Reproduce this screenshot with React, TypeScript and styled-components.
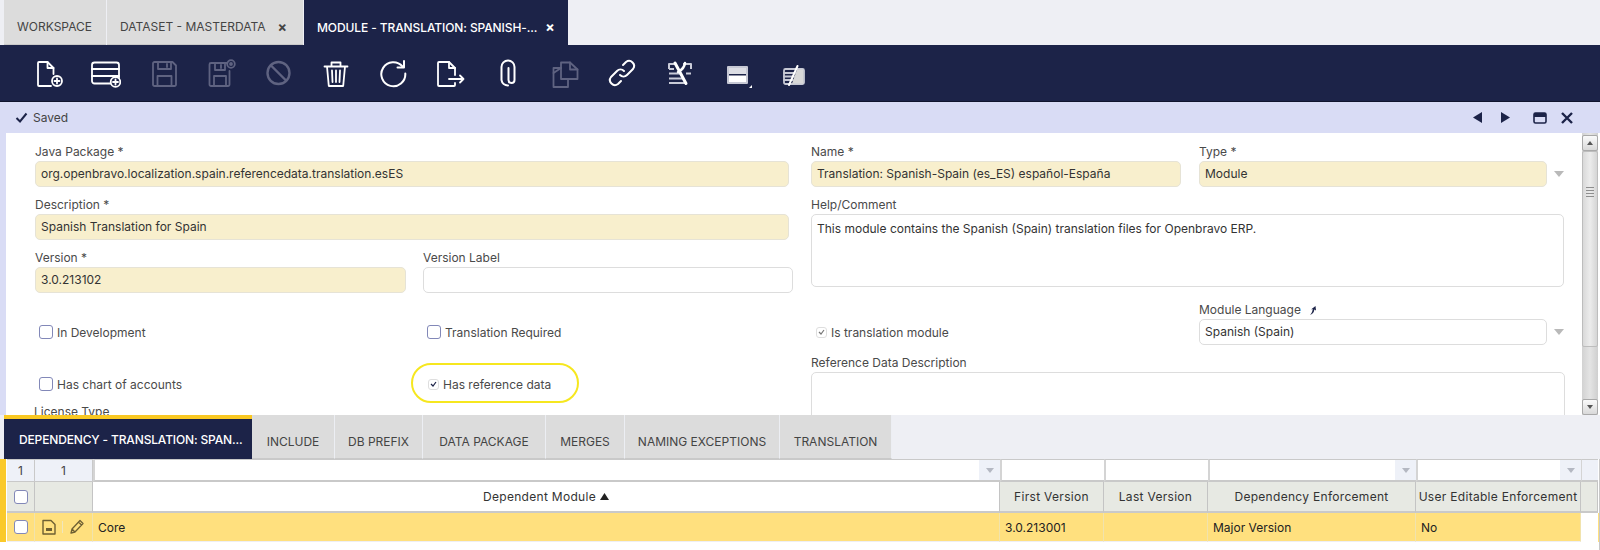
import React from "react";
import styled, { createGlobalStyle } from "styled-components";

const Global = createGlobalStyle`
  html, body { margin: 0; padding: 0; background: #fff; overflow: hidden; }
  body { font-family: "Inter", "Liberation Sans", sans-serif; font-size: 12px; color: #333; }
  * { box-sizing: border-box; }
`;

const Page = styled.div`
  width: 1600px; height: 550px; display: flex; flex-direction: column; overflow: hidden;
`;

/* top tabs */
const TabBar = styled.div`
  height: 45px; flex: none; display: flex; align-items: stretch; padding-left: 4px; background: #eeeff4;
`;
const TopTab = styled.div<{ $w: number; $active?: boolean }>`
  width: ${(p) => p.$w}px; display: flex; align-items: center; justify-content: space-between;
  padding: 9px 16px 0 13px; margin-right: 1px;
  background: ${(p) => (p.$active ? "#1c2348" : "#dcdcdc")};
  color: ${(p) => (p.$active ? "#fff" : "#444")};
  font-size: 12px; font-weight: ${(p) => (p.$active ? 500 : 400)}; white-space: nowrap;
  letter-spacing: ${(p) => (p.$active ? "-0.1px" : "0")};
  border-bottom: ${(p) => (p.$active ? "none" : "1px solid #c9c9c9")};
`;
const TabClose = styled.span`
  font-size: 14px; font-weight: 700; line-height: 1; margin-left: 8px;
`;

/* toolbar */
const Toolbar = styled.div`
  height: 57px; flex: none; background: #1c2348; display: flex; align-items: center; padding: 0 0 1px 20.5px;
  border-bottom: 1px solid #10142e;
`;
const ToolButton = styled.div<{ $off?: boolean }>`
  width: 57.3px; display: flex; justify-content: center; align-items: center;
  color: ${(p) => (p.$off ? "#5f6381" : "#fff")};
  svg { display: block; }
`;

/* status */
const StatusBar = styled.div`
  height: 31px; flex: none; background: #d9dcf5; display: flex; align-items: center; padding: 0 27px 0 15px; color: #444;
`;
const SavedText = styled.span`
  margin-left: 5px; flex: 1; font-size: 12px;
`;
const WinButtons = styled.div`
  display: flex; align-items: center; color: #1c2348;
`;
const WinButton = styled.span<{ $ml: number }>`
  display: block; margin-left: ${(p) => p.$ml}px;
  svg { display: block; }
`;

/* form */
const FormPane = styled.div`
  height: 282px; flex: none; display: flex; background: #fff; overflow: hidden;
`;
const FormBody = styled.div`
  flex: 1; min-width: 0; border-left: 6px solid #d9dcf5; padding: 10px 0 0 29px; overflow: hidden;
`;
const FormGrid = styled.div`
  display: grid;
  grid-template-columns: 388px 388px 388px 385px;
  grid-template-rows: 53px 53px 52px 53px 49px 40px;
`;
const Field = styled.div<{ $span?: number; $rows?: number }>`
  grid-column: span ${(p) => p.$span ?? 1};
  grid-row: span ${(p) => p.$rows ?? 1};
  position: relative;
`;
const Label = styled.div`
  height: 18px; line-height: 18px; font-size: 12px; color: #4a4a4a; white-space: nowrap;
  display: flex; align-items: center; gap: 7px;
`;
const InputBox = styled.div<{ $w: number; $h?: number; $req?: boolean }>`
  width: ${(p) => p.$w}px; height: ${(p) => p.$h ?? 26}px;
  background: ${(p) => (p.$req ? "#f8efcd" : "#fff")};
  border: 1.5px solid ${(p) => (p.$req ? "#e6e3d6" : "#dddddd")};
  border-radius: 5px; padding: 0 5px; font-size: 12px; color: #333; white-space: nowrap; overflow: hidden;
  line-height: ${(p) => (p.$h ? "21px" : "23px")};
  padding-top: ${(p) => (p.$h ? "3px" : "0")};
`;
const SelectRow = styled.div`
  display: flex; align-items: center; gap: 7px;
`;
const Arrow = styled.span`
  width: 0; height: 0; border-left: 5px solid transparent; border-right: 5px solid transparent; border-top: 6px solid #b9b9b9;
`;
const CheckField = styled.div<{ $mt?: number }>`
  grid-column: span 1; position: relative; height: 26px; margin-top: ${(p) => p.$mt ?? 18}px;
  display: flex; align-items: center; gap: 4px; font-size: 12px; color: #4a4a4a; padding-left: 4px; white-space: nowrap;
`;
const CheckBox = styled.span<{ $checked?: boolean }>`
  flex: none; display: inline-flex; align-items: center; justify-content: center;
  width: ${(p) => (p.$checked ? 11 : 14)}px; height: ${(p) => (p.$checked ? 11 : 14)}px;
  margin-left: ${(p) => (p.$checked ? 1 : 0)}px;
  border: ${(p) => (p.$checked ? "1px solid #dedede" : "1.5px solid #8288b8")};
  border-radius: 3px; background: #fff; color: #1c2348;
`;
const Highlight = styled.div`
  position: absolute; left: -12px; top: -8px; width: 168px; height: 40px;
  border: 2px solid #f6e71f; border-radius: 20px; pointer-events: none;
`;
const ClippedLabel = styled(Label)`
  margin-left: -1px; margin-top: 0;
`;

/* scrollbar */
const ScrollTrack = styled.div`
  width: 16px; flex: none; display: flex; flex-direction: column; align-items: stretch;
  background: linear-gradient(90deg, #d2d2d2, #e4e4e4 50%, #cfcfcf); padding-top: 2px;
`;
const ScrollBtn = styled.div`
  height: 16px; flex: none; border: 1px solid #a9a9a9; border-radius: 2px;
  background: linear-gradient(#fafafa, #d9d9d9); display: flex; align-items: center; justify-content: center;
`;
const ScrollThumb = styled.div`
  height: 196px; flex: none; border: 1px solid #bdbdbd; border-radius: 2px;
  background: linear-gradient(90deg, #d9d9d9, #ececec 50%, #d5d5d5); display: flex; flex-direction: column; align-items: center; padding-top: 35px; gap: 2px;
`;
const Grip = styled.i`
  display: block; width: 8px; height: 1px; background: #8e8e8e;
`;
const ScrollSpace = styled.div`
  flex: 1;
`;
const RightGap = styled.div`
  width: 2px; flex: none; background: #fff;
`;
const TinyUp = styled.span`
  width: 0; height: 0; border-left: 3px solid transparent; border-right: 3px solid transparent; border-bottom: 4px solid #555;
`;
const TinyDown = styled.span`
  width: 0; height: 0; border-left: 3px solid transparent; border-right: 3px solid transparent; border-top: 4px solid #555;
`;

/* child tabs */
const ChildBar = styled.div`
  height: 44px; flex: none; display: flex; background: #eeeff4; padding-left: 4px;
`;
const ChildActive = styled.div`
  width: 248px; background: #1c2348; border-top: 4px solid #f9c822; color: #fff; font-weight: 500; letter-spacing: -0.15px;
  font-size: 12px; display: flex; align-items: center; padding-left: 15px; white-space: nowrap;
`;
const ChildTab = styled.div<{ $w: number }>`
  width: ${(p) => p.$w}px; background: #dcdcdc; color: #444; font-size: 12px; white-space: nowrap;
  display: flex; align-items: center; justify-content: center; padding-top: 9px;
  border-right: 1px solid #eceef3; border-bottom: 1px solid #c9c9c9;
`;

/* grid */
const GridPane = styled.div`
  flex: 1; display: flex; flex-direction: column; border-right: 1px solid #c8c8c8;
`;
const GridWrap = styled.div`
  border-left: 6px solid #fac92a; padding-left: 1px; width: 1599px;
`;
const Row = styled.div<{ $h: number; $bg: string }>`
  height: ${(p) => p.$h}px; background: ${(p) => p.$bg};
  display: grid; grid-template-columns: 28px 58px 907px 104px 104px 208px 165px 17px;
`;
const CountCell = styled.div`
  background: #eef1f8; border: 1px solid #c9c9c9; border-left: none; display: flex; align-items: center; justify-content: center; color: #444; font-size: 12px;
`;
const FilterCell = styled.div`
  background: #fff; border-top: 1px solid #c9c9c9; border-bottom: 2px solid #c9c9c9; border-left: 2px solid #d4d4d4;
  display: flex; justify-content: flex-end;
`;
const FilterArrow = styled.div`
  width: 21px; background: #eef1f8; display: flex; align-items: center; justify-content: center;
`;
const SmallArrow = styled.span`
  width: 0; height: 0; border-left: 4px solid transparent; border-right: 4px solid transparent; border-top: 5px solid #b4b8c2;
`;
const FilterEnd = styled.div`
  background: #eef1f8; border-top: 1px solid #c9c9c9; border-bottom: 2px solid #c9c9c9; border-left: 1px solid #d4d4d4;
`;
const HeadCell = styled.div<{ $blank?: boolean }>`
  background: ${(p) => (p.$blank ? "#fff" : "#e7e9e3")};
  border-right: 1px solid #c4c4c4; border-bottom: 2px solid #c9c9c9;
  display: flex; align-items: center; justify-content: center; gap: 4px; font-size: 12px; letter-spacing: 0.3px; color: #333; white-space: nowrap; overflow: hidden;
`;
const DataCell = styled.div`
  border-right: 1px solid #f1e3ad; border-bottom: 1px solid #eeeff4; display: flex; align-items: center; padding-left: 5px;
  font-size: 12px; color: #222; white-space: nowrap;
`;
const CenterCell = styled(DataCell)`
  padding-left: 0; justify-content: center;
`;
const ActionCell = styled(DataCell)`
  padding-left: 7px; gap: 6px;
`;
const GridCheck = styled.span`
  width: 14px; height: 14px; background: #fff; border: 1.5px solid #8288b8; border-radius: 3px;
`;
const ActionSep = styled.span`
  width: 1px; height: 12px; background: #f0e6bd;
`;
const EmptyDataEnd = styled.div`
  background: #fff;
`;

const S = { fill: "none", stroke: "currentColor", strokeWidth: 1.8, strokeLinecap: "round" as const, strokeLinejoin: "round" as const };

const Ic = ({ children }: { children: React.ReactNode }) => (
  <svg width={30} height={30} viewBox="0 0 30 30" {...S}>{children}</svg>
);

const icons: { off?: boolean; el: React.ReactNode }[] = [
  { el: <Ic><path d="M19.500 16V10l-6-6H5a1 1 0 0 0-1 1v22a1 1 0 0 0 1 1h12" /><path d="M13.500 4v6h6" /><circle cx="23" cy="23" r="5" /><path d="M20.500 23h5M23 20.500v5" /></Ic> },
  { el: <Ic><rect x="1" y="4.500" width="27" height="21" rx="2.500" /><path d="M1 11h27M1 18h27" /><circle cx="24.500" cy="24" r="4.800" fill="#1c2348" /><path d="M22 24h5M24.500 21.500v5" /></Ic> },
  { off: true, el: <Ic><path d="M5.500 4h18l3.500 3.500V26.500a1.500 1.500 0 0 1-1.500 1.500H5.500A1.500 1.500 0 0 1 4 26.500v-21A1.500 1.500 0 0 1 5.500 4z" /><path d="M9 4v7h13V4M18 6v3M8.500 28v-10h14v10" /></Ic> },
  { off: true, el: <Ic><path d="M5 5h16M5 5a1.500 1.500 0 0 0-1.500 1.500v20A1.500 1.500 0 0 0 5 28h17a1.500 1.500 0 0 0 1.500-1.500V13" /><path d="M9 5v7h10V5M15 7v3M8 28v-10h12v10" /><circle cx="25" cy="6" r="3.800" /><circle cx="25" cy="6" r="1" /></Ic> },
  { off: true, el: <Ic><circle cx="15.500" cy="15" r="11" strokeWidth="2.400" /><path d="M8 7.500l15 15" strokeWidth="2.400" /></Ic> },
  { el: <Ic><path d="M3.500 8.500h23M10.500 8V4.500h9V8M6 8.500l1.800 19.500h14.400l1.800-19.500M11 12.500l.5 11.500M15 12.500v11.500M19 12.500l-.5 11.500" /></Ic> },
  { el: <Ic><path d="M24.500 8.500a12 12 0 1 0 2.800 7" strokeWidth="2" /><path d="M26 3v6.500h-6.500" strokeWidth="2" /></Ic> },
  { el: <Ic><path d="M20 17V10l-6-6H4a1 1 0 0 0-1 1v22a1 1 0 0 0 1 1h15a1 1 0 0 0 1-1v-2" /><path d="M14 4v6h6" /><path d="M14 21h14.500M25 17.500l3.500 3.500-3.500 3.500" /></Ic> },
  { el: <Ic><path d="M15.500 10v12a3 3 0 0 0 6 0V9a6.500 6.500 0 0 0-13 0v13a6.500 6.500 0 0 0 6.500 5.500" strokeWidth="2" /></Ic> },
  { off: true, el: <Ic><path d="M11 10H3.500v19H18v-8" /><path d="M11 4.500h9l7.500 7V21H11z" /><path d="M20 4.500v7h7.500M3.500 15l7.500-5" /></Ic> },
  { el: <Ic><path d="M13 17a5 5 0 0 0 7 0l6-6a5 5 0 0 0-7-7l-3 3" strokeWidth="2" /><path d="M17 13a5 5 0 0 0-7 0l-6 6a5 5 0 0 0 7 7l3-3" strokeWidth="2" /></Ic> },
  { el: <Ic>
    <path d="M5 11V6h7M19 6h8v5M5 11h5M5 15.500h11M22 15.500h5M5 20.500h14M5 25h16" stroke="#c9cbd8" strokeWidth="2" strokeLinecap="butt" />
    <path d="M11 5l11 20.500" stroke="#fff" strokeWidth="3" />
    <path d="M21 5c-.5 4-3 7-7 9" stroke="#fff" strokeWidth="2.500" />
  </Ic> },
  { el: <Ic>
    <rect x="6" y="9" width="19" height="16" stroke="#c6c8d4" strokeWidth="2" strokeLinecap="butt" />
    <rect x="7" y="10" width="17" height="6" fill="#dcdde4" stroke="none" />
    <rect x="7" y="17.500" width="17" height="6.500" fill="#fff" stroke="none" />
    <path d="M27 30h3v-3z" fill="#fff" stroke="none" />
  </Ic> },
  { el: <Ic>
    <rect x="5" y="11" width="20" height="15" rx="1.500" stroke="#c6c8d4" />
    <path d="M5 15h11M5 18.500h10M5 22h9" stroke="#c6c8d4" />
    <path d="M18 11.500h6.500v14H13z" fill="#d8d8d8" stroke="none" />
    <path d="M18.500 8L10 27" stroke="#fff" strokeWidth="2" />
  </Ic> },
];

const cols = ["First Version", "Last Version", "Dependency Enforcement", "User Editable Enforcement"];

const Filter = ({ arrow }: { arrow?: boolean }) => (
  <FilterCell>{arrow && <FilterArrow><SmallArrow /></FilterArrow>}</FilterCell>
);

export default function App() {
  return (
    <Page>
      <Global />
      <TabBar>
        <TopTab $w={102}>WORKSPACE</TopTab>
        <TopTab $w={196}>DATASET - MASTERDATA<TabClose>×</TabClose></TopTab>
        <TopTab $w={264} $active>MODULE - TRANSLATION: SPANISH-...<TabClose>×</TabClose></TopTab>
      </TabBar>
      <Toolbar>
        {icons.map((ic, i) => <ToolButton key={i} $off={ic.off}>{ic.el}</ToolButton>)}
      </Toolbar>
      <StatusBar>
        <svg width="13" height="11" viewBox="0 0 13 11"><path d="M1.500 6l3.500 3.500L11.500 1.500" fill="none" stroke="#1c2348" strokeWidth="2" /></svg>
        <SavedText>Saved</SavedText>
        <WinButtons>
          <WinButton $ml={0}><svg width="9" height="11" viewBox="0 0 9 11"><path d="M9 0v11L0 5.500z" fill="currentColor" /></svg></WinButton>
          <WinButton $ml={19}><svg width="9" height="11" viewBox="0 0 9 11"><path d="M0 0v11l9-5.500z" fill="currentColor" /></svg></WinButton>
          <WinButton $ml={23}><svg width="14" height="12" viewBox="0 0 14 12"><rect x="1" y="1" width="12" height="10" rx="1.500" fill="none" stroke="currentColor" strokeWidth="1.600" /><rect x="1" y="1" width="12" height="4" fill="currentColor" /></svg></WinButton>
          <WinButton $ml={14}><svg width="12" height="12" viewBox="0 0 12 12"><path d="M1 1l10 10M11 1L1 11" stroke="currentColor" strokeWidth="2.400" /></svg></WinButton>
        </WinButtons>
      </StatusBar>
      <FormPane>
        <FormBody>
          <FormGrid>
            <Field $span={2}><Label>Java Package *</Label><InputBox $w={754} $req>org.openbravo.localization.spain.referencedata.translation.esES</InputBox></Field>
            <Field><Label>Name *</Label><InputBox $w={370} $req>Translation: Spanish-Spain (es_ES) español-España</InputBox></Field>
            <Field><Label>Type *</Label><SelectRow><InputBox $w={348} $req>Module</InputBox><Arrow /></SelectRow></Field>

            <Field $span={2}><Label>Description *</Label><InputBox $w={754} $req>Spanish Translation for Spain</InputBox></Field>
            <Field $span={2} $rows={2}><Label>Help/Comment</Label><InputBox $w={753} $h={73}>This module contains the Spanish (Spain) translation files for Openbravo ERP.</InputBox></Field>

            <Field><Label>Version *</Label><InputBox $w={371} $req>3.0.213102</InputBox></Field>
            <Field><Label>Version Label</Label><InputBox $w={370} /></Field>

            <CheckField><CheckBox />In Development</CheckField>
            <CheckField><CheckBox />Translation Required</CheckField>
            <CheckField>
              <CheckBox $checked><svg width="7" height="6" viewBox="0 0 7 6"><path d="M1 3l2 2 3-4" fill="none" stroke="#777" strokeWidth="1.200" /></svg></CheckBox>
              Is translation module
            </CheckField>
            <Field>
              <Label>Module Language
                <svg width="9" height="11" viewBox="0 0 9 11"><path d="M2 10c2-2 2.500-4 2.700-6L3 4.500 7.500 1 8 5.500 6.300 4.500C6.200 7 5 9 2 10z" fill="#1c2348" /></svg>
              </Label>
              <SelectRow><InputBox $w={348}>Spanish (Spain)</InputBox><Arrow /></SelectRow>
            </Field>

            <CheckField $mt={17}><CheckBox />Has chart of accounts</CheckField>
            <CheckField $mt={17}>
              <Highlight />
              <CheckBox $checked><svg width="7" height="6" viewBox="0 0 7 6"><path d="M1 3l2 2 3-4" fill="none" stroke="#1c2348" strokeWidth="1.200" /></svg></CheckBox>
              Has reference data
            </CheckField>
            <Field $span={2} $rows={2}><Label>Reference Data Description</Label><InputBox $w={754} $h={80} /></Field>

            <Field $span={2}><ClippedLabel>License Type</ClippedLabel></Field>
          </FormGrid>
        </FormBody>
        <ScrollTrack>
          <ScrollBtn><TinyUp /></ScrollBtn>
          <ScrollThumb><Grip /><Grip /><Grip /><Grip /></ScrollThumb>
          <ScrollSpace />
          <ScrollBtn><TinyDown /></ScrollBtn>
        </ScrollTrack>
        <RightGap />
      </FormPane>
      <ChildBar>
        <ChildActive>DEPENDENCY - TRANSLATION: SPAN...</ChildActive>
        <ChildTab $w={83}>INCLUDE</ChildTab>
        <ChildTab $w={88}>DB PREFIX</ChildTab>
        <ChildTab $w={123}>DATA PACKAGE</ChildTab>
        <ChildTab $w={79}>MERGES</ChildTab>
        <ChildTab $w={155}>NAMING EXCEPTIONS</ChildTab>
        <ChildTab $w={112}>TRANSLATION</ChildTab>
      </ChildBar>
      <GridPane>
        <GridWrap>
          <Row $h={23} $bg="#fff">
            <CountCell>1</CountCell>
            <CountCell>1</CountCell>
            <Filter arrow />
            <Filter />
            <Filter />
            <Filter arrow />
            <Filter arrow />
            <FilterEnd />
          </Row>
          <Row $h={31} $bg="#fff">
            <HeadCell><GridCheck /></HeadCell>
            <HeadCell />
            <HeadCell $blank>Dependent Module<svg width="9" height="7" viewBox="0 0 9 7"><path d="M4.500 0L9 7H0z" fill="#222" /></svg></HeadCell>
            {cols.map((c) => <HeadCell key={c}>{c}</HeadCell>)}
            <HeadCell />
          </Row>
          <Row $h={29} $bg="#ffe07e">
            <CenterCell><GridCheck /></CenterCell>
            <ActionCell>
              <svg width="14" height="16" viewBox="0 0 14 16"><path d="M1 1.500h8l4 4v9.500H1z" fill="none" stroke="#6e5f33" strokeWidth="1.400" strokeLinejoin="round" /><path d="M4 9h6v3H4z" fill="#6e5f33" /></svg>
              <ActionSep />
              <svg width="16" height="16" viewBox="0 0 16 16"><path d="M2 14l1-4 8-8.500 3 3L6 13zM9.500 3l3 3M3 10l3 3" fill="none" stroke="#6e5f33" strokeWidth="1.300" strokeLinejoin="round" /></svg>
            </ActionCell>
            <DataCell>Core</DataCell>
            <DataCell>3.0.213001</DataCell>
            <DataCell />
            <DataCell>Major Version</DataCell>
            <DataCell>No</DataCell>
            <EmptyDataEnd />
          </Row>
        </GridWrap>
      </GridPane>
    </Page>
  );
}
